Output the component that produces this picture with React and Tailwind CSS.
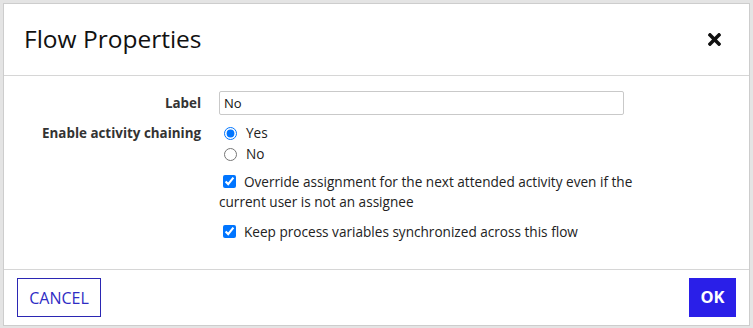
import React, { useState } from 'react';
import { FaTimes } from 'react-icons/fa';

export default function App() {
  const [label, setLabel] = useState('No');
  const [chaining, setChaining] = useState('yes');
  const [override, setOverride] = useState(true);
  const [keepSync, setKeepSync] = useState(true);

  return (
    <div className="w-[753px] h-[328px] bg-[#e4e4e4] pt-[3px] pl-[3px] font-['Open_Sans',sans-serif]">
      <div className="w-[747px] h-[323px] bg-white border border-[#cdcdcd] flex flex-col">
        <div className="h-[72px] flex items-center justify-between pl-[20px] pr-[25px] border-b border-[#d6d6d6]">
          <h2 className="text-[24.5px] font-medium text-[#111]">Flow Properties</h2>
          <button className="text-[#111]">
            <FaTimes size={19} />
          </button>
        </div>

        <div className="flex-1 pt-[15px] grid grid-cols-[197px_1fr] gap-x-[18px] content-start text-[#222]">
          <div className="text-[13.4px] font-bold text-[#333] text-right leading-[24px]">Label</div>
          <input
            value={label}
            onChange={e => setLabel(e.target.value)}
            className="w-[405px] h-[24px] border border-[#c9c9c9] rounded-[2px] px-[4px] text-[13px] text-[#111] outline-none"
          />

          <div className="mt-[8px] text-[13.4px] font-bold text-[#333] text-right leading-[20px]">
            Enable activity chaining
          </div>
          <div className="mt-[8px] flex flex-col pl-[5px] text-[13.6px]">
            <label className="flex items-center gap-[9px] h-[21px]">
              <input
                type="radio"
                name="chain"
                checked={chaining === 'yes'}
                onChange={() => setChaining('yes')}
                className="m-0 w-[13px] h-[13px]"
              />
              Yes
            </label>
            <label className="flex items-center gap-[9px] h-[21px]">
              <input
                type="radio"
                name="chain"
                checked={chaining === 'no'}
                onChange={() => setChaining('no')}
                className="m-0 w-[13px] h-[13px]"
              />
              No
            </label>
          </div>

          <div />
          <div className="mt-[7px] w-[430px] text-[13.6px] leading-[20px]">
            <input
              type="checkbox"
              checked={override}
              onChange={e => setOverride(e.target.checked)}
              className="ml-[4px] mr-[8px] w-[13px] h-[13px] align-[-1px]"
            />
            Override assignment for the next attended activity even if the current user is not an assignee
          </div>

          <div />
          <div className="mt-[10px] text-[13.6px] leading-[20px]">
            <input
              type="checkbox"
              checked={keepSync}
              onChange={e => setKeepSync(e.target.checked)}
              className="ml-[4px] mr-[8px] w-[13px] h-[13px] align-[-1px]"
            />
            Keep process variables synchronized across this flow
          </div>
        </div>

        <div className="h-[56px] border-t border-[#d6d6d6] flex items-center justify-between pl-[13px] pr-[13px]">
          <button className="w-[84px] h-[39px] border border-[#2b27b3] text-[#2f2cc4] text-[16px] font-medium">
            CANCEL
          </button>
          <button className="w-[47px] h-[39px] bg-[#2a1fe8] text-white text-[16.5px] font-bold">
            OK
          </button>
        </div>
      </div>
    </div>
  );
}
